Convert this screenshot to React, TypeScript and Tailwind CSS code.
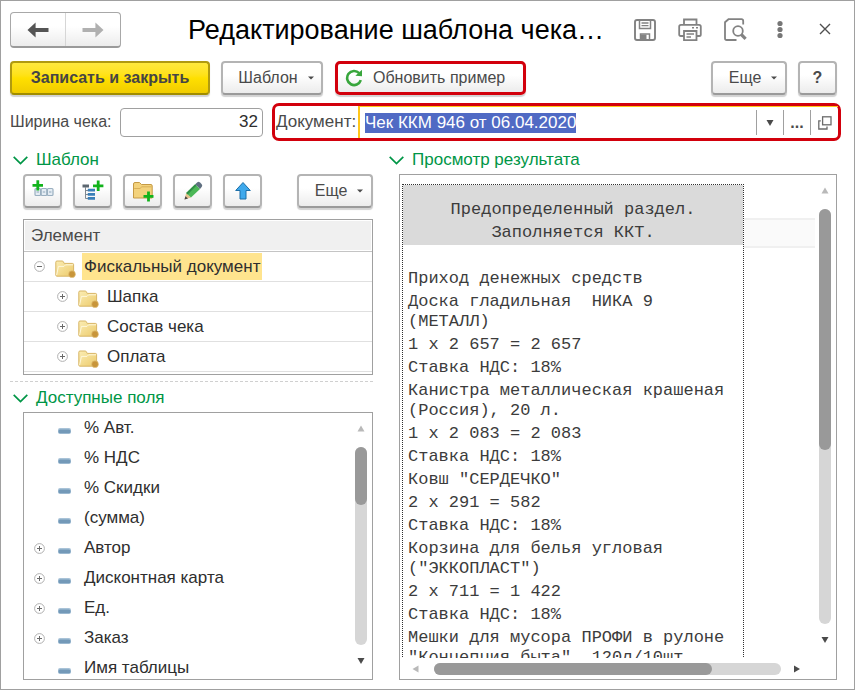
import { useEffect, useRef, type ReactNode } from 'react';

const SANS = "font-['Liberation_Sans',Arial,sans-serif]";
const MONO = "font-['Liberation_Mono','Courier_New',monospace]";

const BUTTON =
  'flex h-[34px] items-center justify-center rounded-[4px] border-2 border-[#b4b4b4] border-b-[#9a9a9a] bg-linear-to-b from-white from-40% to-[#ececec] text-[16px] text-[#4a4a4a] shadow-[0_2px_1px_#d2d2d2]';

function Caret() {
  return (
    <svg width="6" height="4" viewBox="0 0 6 4" aria-hidden="true">
      <path d="M0 0.5h6L3 3.5z" fill="#4a4a4a" />
    </svg>
  );
}

function Chevron() {
  return (
    <svg width="15" height="9" viewBox="0 0 15 9" fill="none" stroke="#009646" strokeWidth="1.7" aria-hidden="true">
      <path d="M0.7 0.8L7.5 7.6L14.3 0.8" />
    </svg>
  );
}

function SectionTitle({ children }: { children: ReactNode }) {
  return (
    <h2 className="flex h-5 items-center gap-2 text-[#009646]">
      <Chevron />
      {children}
    </h2>
  );
}

function MoreButton() {
  return (
    <button type="button" className={`${BUTTON} w-[76px] gap-2.5 pl-2`}>
      Еще
      <Caret />
    </button>
  );
}

function Expander({ open = false }: { open?: boolean }) {
  return (
    <svg width="11" height="11" viewBox="0 0 11 11" fill="none" className="shrink-0" aria-hidden="true">
      <circle cx="5.5" cy="5.5" r="4.9" stroke="#b0b0b0" />
      <path d={open ? 'M3 5.5h5' : 'M3 5.5h5M5.5 3v5'} stroke="#6a6a6a" />
    </svg>
  );
}

function Folder() {
  return (
    <svg width="21" height="18" viewBox="0 0 21 18" className="shrink-0" aria-hidden="true">
      <defs>
        <linearGradient id="folderFill" x1="0" y1="0" x2="1" y2="1">
          <stop offset="0" stopColor="#fbedb4" />
          <stop offset="1" stopColor="#ecca6a" />
        </linearGradient>
      </defs>
      <path
        d="M0.8 15V2.2Q0.8 1 2 1H7.2Q8 1 8.4 1.8L9.2 3.4H17.4Q18.6 3.4 18.6 4.6V15Q18.6 16.2 17.4 16.2H2Q0.8 16.2 0.8 15Z"
        fill="url(#folderFill)"
        stroke="#d8b666"
      />
      <path d="M1.6 15.2L3.4 6.4H9L10.6 4.8H18" fill="none" stroke="#fff8dc" />
      <circle cx="17" cy="14.2" r="3.4" fill="#c8953a" stroke="#e3c27c" strokeWidth="0.6" />
    </svg>
  );
}

function FieldMark() {
  return (
    <svg width="13" height="6" viewBox="0 0 13 6" className="mt-[5px] shrink-0" aria-hidden="true">
      <rect width="13" height="6" rx="2" fill="#a9c3d8" />
      <rect x="0.5" y="1.4" width="12" height="3.8" rx="1.5" fill="#7399b8" />
    </svg>
  );
}

function Arrow({ dir, dim = false }: { dir: 'up' | 'down' | 'left' | 'right'; dim?: boolean }) {
  const paths = {
    up: 'M0.5 6.5h7L4 0.5z',
    down: 'M0.5 1h7L4 7z',
    left: 'M6.5 0.5v7L0.5 4z',
    right: 'M1 0.5v7L7 4z',
  };
  return (
    <svg width="8" height="8" viewBox="0 0 8 8" className="shrink-0" aria-hidden="true">
      <path d={paths[dir]} fill={dim ? '#b9b9b9' : '#4a4a4a'} />
    </svg>
  );
}

function VerticalBar({ thumb }: { thumb: string }) {
  return (
    <div className="flex w-3 shrink-0 flex-col items-center">
      <Arrow dir="up" dim />
      <div className="mt-[14px] mb-3 w-3 flex-1 rounded-full bg-[#d6d6d6]">
        <div className={`w-3 rounded-full bg-[#999999] ${thumb}`} />
      </div>
      <Arrow dir="down" />
    </div>
  );
}

function NavArrow({ back = false }: { back?: boolean }) {
  return (
    <svg width="22" height="16" viewBox="0 0 22 16" aria-hidden="true">
      {back ? (
        <path d="M0.5 8L8.6 0.4V6H21.5V10H8.6V15.6Z" fill="#545454" />
      ) : (
        <path d="M21.5 8L13.4 0.4V6H0.5V10H13.4V15.6Z" fill="#b0b0b0" />
      )}
    </svg>
  );
}

function SaveIcon() {
  return (
    <svg width="24" height="24" viewBox="0 0 24 24" fill="none" stroke="#828282" strokeWidth="1.9" aria-hidden="true">
      <path d="M2 4Q2 2 4 2H20Q22 2 22 4V20Q22 22 20 22H4Q2 22 2 20Z" />
      <path d="M6.5 2V10.5H17.5V2" strokeWidth="1.5" />
      <path d="M8.5 5H15.5M8.5 7.6H15.5" strokeWidth="1.3" />
      <path d="M7.5 22V16H16.5V22" strokeWidth="1.5" />
      <path d="M8 16.5H13.5V22H8z" fill="#828282" stroke="none" />
    </svg>
  );
}

function PrintIcon() {
  return (
    <svg width="24" height="24" viewBox="0 0 24 24" fill="none" stroke="#828282" strokeWidth="1.8" aria-hidden="true">
      <path d="M6 6.5V1.5H18.5V6.5" />
      <path d="M6 18H2.8Q1.2 18 1.2 16.4V8.6Q1.2 6.8 3 6.8H21Q22.8 6.8 22.8 8.6V16.4Q22.8 18 21.2 18H18.5" />
      <path d="M6 13V22.2H18.5V13Z" />
      <path d="M8.5 16H16M8.5 19H13" strokeWidth="1.4" />
      <path d="M14 9.7H16M18 9.7H20" strokeWidth="1.5" />
    </svg>
  );
}

function PreviewIcon() {
  return (
    <svg width="24" height="24" viewBox="0 0 24 24" fill="none" stroke="#828282" aria-hidden="true">
      <path d="M20.2 6.5V3Q20.2 1.2 18.4 1.2H5.5L2 4.2V20.2Q2 22 3.8 22H13.5" strokeWidth="1.8" />
      <circle cx="15" cy="13" r="4.8" strokeWidth="1.8" />
      <path d="M18.2 16.4L22.6 20.8" strokeWidth="3.2" />
    </svg>
  );
}

function DotsIcon() {
  return (
    <svg width="24" height="24" viewBox="0 0 24 24" fill="#767676" aria-hidden="true">
      <circle cx="12" cy="5.5" r="2.6" />
      <circle cx="12" cy="11.5" r="2.6" />
      <circle cx="12" cy="17.5" r="2.6" />
    </svg>
  );
}

function CloseIcon() {
  return (
    <svg width="24" height="24" viewBox="0 0 24 24" fill="none" stroke="#4f4f4f" strokeWidth="1.4" aria-hidden="true">
      <path d="M7 6L17 16M17 6L7 16" />
    </svg>
  );
}

function RefreshIcon() {
  return (
    <svg width="18" height="18" viewBox="0 0 18 18" fill="none" aria-hidden="true">
      <path d="M14.2 4.2A7 7 0 1 0 15.8 11.2" stroke="#38a63c" strokeWidth="2.6" />
      <path d="M10.4 6.8L17 7.2V0.8Z" fill="#38a63c" />
    </svg>
  );
}

function OpenIcon() {
  return (
    <svg width="14" height="14" viewBox="0 0 14 14" fill="none" stroke="#6b6b6b" strokeWidth="1.3" aria-hidden="true">
      <rect x="4.6" y="0.8" width="8.4" height="8" />
      <path d="M2.8 4.8H0.8V13H9V10.6" />
    </svg>
  );
}

function AddFieldIcon() {
  return (
    <svg width="24" height="24" viewBox="0 0 24 24" fill="none" aria-hidden="true">
      <g fill="#e4ecf3" stroke="#9aafc0" strokeWidth="1.2">
        <rect x="4" y="9.5" width="5.6" height="7" rx="1" />
        <rect x="10.2" y="9.5" width="5.6" height="7" rx="1" />
        <rect x="16.4" y="9.5" width="5.6" height="7" rx="1" />
      </g>
      <path d="M5.6 13H8M11.8 13H14.2M18 13H20.4" stroke="#8ea6ba" />
      <path d="M1.5 6.4H12M6.8 1.2V11.6" stroke="#12b31c" strokeWidth="2.8" />
    </svg>
  );
}

function AddTreeIcon() {
  return (
    <svg width="24" height="24" viewBox="0 0 24 24" fill="none" aria-hidden="true">
      <path d="M1.5 7H8" stroke="#5c6770" strokeWidth="3" />
      <path d="M4.5 8V19.5H8M4.5 11.5H8M4.5 15.5H8" stroke="#7f8991" />
      <path d="M6.8 11.2H14M6.8 15.3H14M6.8 19.4H14" stroke="#3a7fb8" strokeWidth="2.8" />
      <path d="M12 6.8H22.4M17.2 1.6V12" stroke="#12b31c" strokeWidth="2.8" />
    </svg>
  );
}

function AddFolderIcon() {
  return (
    <svg width="24" height="24" viewBox="0 0 24 24" fill="none" aria-hidden="true">
      <path d="M2.5 19V5Q2.5 3.5 4 3.5H8.5L10.5 5.5H20Q21.2 5.5 21.2 7V19Z" fill="#f3d27c" stroke="#c59a45" />
      <path d="M3.2 9.5H9L10.8 7.8H20.6" stroke="#d8af58" />
      <path d="M12.5 17.4H22.5M17.5 12.4V22.4" stroke="#12b31c" strokeWidth="2.8" />
    </svg>
  );
}

function PencilIcon() {
  return (
    <svg width="24" height="24" viewBox="0 0 24 24" aria-hidden="true">
      <path d="M3.5 20.5L5.2 14L10 18.6Z" fill="#e6c08a" />
      <path d="M3.5 20.5L4.4 17.2L7 19.6Z" fill="#444" />
      <path d="M5.2 14L14.2 5.2L19 10L10 18.6Z" fill="#4cb857" />
      <path d="M5.2 14L14.2 5.2L15.6 6.6L6.7 15.4Z" fill="#2f8f45" />
      <path d="M14.2 5.2L16.4 3.2Q17.6 2.2 19 3.4L20.6 5Q21.8 6.4 20.8 7.8L19 10Z" fill="#5f6f80" />
    </svg>
  );
}

function UpIcon() {
  return (
    <svg width="24" height="24" viewBox="0 0 24 24" aria-hidden="true">
      <path d="M12 3.5L19.3 11.5H15V20H9V11.5H4.7Z" fill="#3fa9ec" stroke="#1d6fa8" strokeLinejoin="round" />
    </svg>
  );
}

const windowActions = [
  { label: 'Сохранить', icon: <SaveIcon /> },
  { label: 'Печать', icon: <PrintIcon /> },
  { label: 'Просмотр', icon: <PreviewIcon /> },
  { label: 'Дополнительно', icon: <DotsIcon /> },
  { label: 'Закрыть', icon: <CloseIcon /> },
];

const templateActions = [
  { label: 'Добавить поле', icon: <AddFieldIcon /> },
  { label: 'Добавить раздел', icon: <AddTreeIcon /> },
  { label: 'Добавить группу', icon: <AddFolderIcon /> },
  { label: 'Изменить', icon: <PencilIcon /> },
  { label: 'Переместить вверх', icon: <UpIcon /> },
];

const sections = ['Шапка', 'Состав чека', 'Оплата'];

const fields = [
  { name: '% Авт.', group: false },
  { name: '% НДС', group: false },
  { name: '% Скидки', group: false },
  { name: '(сумма)', group: false },
  { name: 'Автор', group: true },
  { name: 'Дисконтная карта', group: true },
  { name: 'Ед.', group: true },
  { name: 'Заказ', group: true },
  { name: 'Имя таблицы', group: false },
];

const receipt = [
  'Приход денежных средств',
  'Доска гладильная  НИКА 9\n(МЕТАЛЛ)',
  '1 x 2 657 = 2 657',
  'Ставка НДС: 18%',
  'Канистра металлическая крашеная\n(Россия), 20 л.',
  '1 x 2 083 = 2 083',
  'Ставка НДС: 18%',
  'Ковш "СЕРДЕЧКО"',
  '2 x 291 = 582',
  'Ставка НДС: 18%',
  'Корзина для белья угловая\n("ЭККОПЛАСТ")',
  '2 x 711 = 1 422',
  'Ставка НДС: 18%',
  'Мешки для мусора ПРОФИ в рулоне\n"Концепция быта", 120л/10шт',
];

function Header() {
  return (
    <header className="flex h-9 items-center">
      <div className="flex h-9 w-[111px] shrink-0 rounded-[4px] border border-[#a8a8a8] border-b-2 border-b-[#9a9a9a] bg-linear-to-b from-white from-40% to-[#ececec]">
        <button type="button" aria-label="Назад" className="flex flex-1 items-center justify-center border-r border-[#d6d6d6]">
          <NavArrow back />
        </button>
        <button type="button" aria-label="Вперед" className="flex flex-1 items-center justify-center">
          <NavArrow />
        </button>
      </div>
      <h1 className="min-w-0 flex-1 truncate pl-[67px] text-[27px] leading-9 text-black">Редактирование шаблона чека…</h1>
      <div className="flex shrink-0 gap-[21px]">
        {windowActions.map((action) => (
          <button key={action.label} type="button" aria-label={action.label}>
            {action.icon}
          </button>
        ))}
      </div>
    </header>
  );
}

function CommandBar() {
  return (
    <div className="mt-[13px] flex items-center">
      <button
        type="button"
        className="h-[34px] w-[200px] rounded-[4px] border-2 border-[#b09a10] border-b-[#a08c00] bg-linear-to-b from-[#ffe93c] via-[#ffe000] to-[#f0cc00] text-[16px] font-bold text-[#454545] shadow-[0_2px_1px_#d2d2d2]"
      >
        Записать и закрыть
      </button>
      <button type="button" className={`${BUTTON} ml-[11px] w-[102px] gap-2.5 pl-2`}>
        Шаблон
        <Caret />
      </button>
      <button
        type="button"
        className="ml-3 flex h-[34px] w-[191px] items-center gap-2.5 rounded-[5px] border-3 border-[#d2000c] bg-linear-to-b from-white from-40% to-[#ececec] pl-[7px] text-[16px] text-[#4a4a4a] shadow-[0_2px_1px_#d2d2d2]"
      >
        <RefreshIcon />
        Обновить пример
      </button>
      <div className="ml-auto flex gap-[11px]">
        <MoreButton />
        <button type="button" className={`${BUTTON} w-[39px] font-bold`}>
          ?
        </button>
      </div>
    </div>
  );
}

function Parameters() {
  const documentInput = useRef<HTMLInputElement>(null);

  useEffect(() => {
    documentInput.current?.focus();
    documentInput.current?.select();
  }, []);

  return (
    <div className="mt-2 -mr-1 flex h-[38px] items-center">
      <label htmlFor="width" className="w-[110px] shrink-0 text-[16px] whitespace-nowrap text-[#4a4a4a]">
        Ширина чека:
      </label>
      <input
        id="width"
        defaultValue="32"
        className="h-[29px] w-[143px] rounded-[4px] border border-[#a0a0a0] bg-white px-1 text-right text-[#2e2e2e]"
      />
      <div className="ml-[9px] flex h-[38px] flex-1 items-stretch rounded-[7px] border-3 border-[#d2000c]">
        <label htmlFor="document" className="flex w-[83px] shrink-0 items-center pl-px text-[#4a4a4a]">
          Документ:
        </label>
        <div className="flex min-w-0 flex-1 items-stretch border-t border-l-2 border-[#ffc61a]">
          <input
            id="document"
            ref={documentInput}
            defaultValue="Чек ККМ 946 от 06.04.2020"
            className="min-w-0 flex-1 pl-[5px] text-[#2e2e2e] outline-none selection:bg-[#506ac4] selection:text-white"
          />
          <div className="my-[3px] flex">
            <button type="button" aria-label="Выбрать из списка" className="flex w-[27px] items-center justify-center border-l border-[#a0a0a0]">
              <Arrow dir="down" />
            </button>
            <button type="button" aria-label="Выбрать" className="flex w-[27px] items-center justify-center border-l border-[#a0a0a0] text-[16px] font-bold text-[#4a4a4a]">
              ...
            </button>
            <button type="button" aria-label="Открыть" className="flex w-7 items-center justify-center border-l border-[#a0a0a0]">
              <OpenIcon />
            </button>
          </div>
        </div>
      </div>
    </div>
  );
}

function TemplatePanel() {
  return (
    <section>
      <div className="pl-[3px]">
        <SectionTitle>Шаблон</SectionTitle>
      </div>
      <div className="mt-1 flex gap-[11px] pl-[13px]">
        {templateActions.map((action) => (
          <button key={action.label} type="button" aria-label={action.label} className={`${BUTTON} w-[39px]`}>
            {action.icon}
          </button>
        ))}
        <div className="ml-auto">
          <MoreButton />
        </div>
      </div>
      <div className="mt-[11px] ml-[13px] h-[156px] overflow-hidden border border-[#a0a0a0]">
        <table className="w-full border-separate border-spacing-0 text-[#2e2e2e]">
          <thead>
            <tr>
              <th className="h-8 border-b border-[#c4c4c4] p-px text-left font-normal text-[#4a4a4a]">
                <div className="flex h-[29px] items-center bg-[#f0f0f0] pl-1.5">Элемент</div>
              </th>
            </tr>
          </thead>
          <tbody>
            <tr>
              <td className="h-[30px] border-b border-[#e0e0e0] p-0">
                <div className="flex h-[29px] items-center pl-2.5">
                  <Expander open />
                  <span className="ml-2.5 flex pt-1">
                    <Folder />
                  </span>
                  <span className="ml-1.5 flex h-[27px] items-center bg-[#ffe48e] px-0.5">Фискальный документ</span>
                </div>
              </td>
            </tr>
            {sections.map((name) => (
              <tr key={name}>
                <td className="h-[30px] border-b border-[#e0e0e0] p-0">
                  <div className="flex h-[29px] items-center pl-[33px]">
                    <Expander />
                    <span className="ml-2.5 flex pt-1">
                      <Folder />
                    </span>
                    <span className="ml-2">{name}</span>
                  </div>
                </td>
              </tr>
            ))}
          </tbody>
        </table>
      </div>
    </section>
  );
}

function FieldsPanel() {
  return (
    <section className="flex min-h-0 flex-1 flex-col">
      <div className="pl-[3px]">
        <SectionTitle>Доступные поля</SectionTitle>
      </div>
      <div className="mt-1 ml-[13px] flex min-h-0 flex-1 overflow-hidden border border-[#a0a0a0] pr-[5px]">
        <ul className="flex-1 text-[#2e2e2e]">
          {fields.map((field) => (
            <li key={field.name} className="flex h-[30px] items-center pl-2.5">
              <span className="w-6">{field.group && <Expander />}</span>
              <FieldMark />
              <span className="ml-[13px]">{field.name}</span>
            </li>
          ))}
        </ul>
        <div className="flex pt-3 pb-3.5">
          <VerticalBar thumb="h-[58px]" />
        </div>
      </div>
    </section>
  );
}

function ResultPanel() {
  return (
    <section className="flex min-h-0 min-w-0 flex-1 flex-col">
      <SectionTitle>Просмотр результата</SectionTitle>
      <div className="mt-1 ml-[10px] flex min-h-0 flex-1 border border-[#a0a0a0] pr-[5px]">
        <div className="flex min-w-0 flex-1 flex-col">
          <div className="flex min-h-0 flex-1 overflow-hidden pt-[9px]">
            <div
              className={`ml-0.5 w-[342px] shrink-0 self-start border border-dotted border-[#303030] text-[17px] leading-5 text-[#3c3c3c] ${MONO}`}
            >
              <div className="bg-[#dadada] pt-[14px] text-center">
                <p className="h-[23px] pt-px">Предопределенный раздел.</p>
                <p className="h-[23px] pt-px">Заполняется ККТ.</p>
              </div>
              <div className="pt-[23px] pl-[5px]">
                {receipt.map((line, index) => (
                  <p key={index} className="pt-px pb-0.5 whitespace-pre">
                    {line}
                  </p>
                ))}
              </div>
            </div>
            <div className="mt-[34px] h-[30px] flex-1 border-y-2 border-[#f0f0f0] bg-[#fafafa]" />
          </div>
          <div className="flex h-[21px] items-center pr-3.5 pl-3">
            <Arrow dir="left" dim />
            <div className="mr-3 ml-[14px] h-3 flex-1 rounded-full bg-[#d6d6d6]">
              <div className="h-3 w-4/5 rounded-full bg-[#999999]" />
            </div>
            <Arrow dir="right" />
          </div>
        </div>
        <div className="flex pt-3 pb-[35px] pl-1">
          <VerticalBar thumb="h-[58%]" />
        </div>
      </div>
    </section>
  );
}

export default function App() {
  return (
    <main className={`flex h-screen flex-col border border-[#a0a0a0] bg-white pt-[11px] pr-[17px] pb-[9px] pl-[9px] text-[17px] leading-5 ${SANS}`}>
      <Header />
      <CommandBar />
      <Parameters />
      <div className="mt-[9px] flex min-h-0 flex-1 gap-4">
        <div className="flex w-[363px] shrink-0 flex-col">
          <TemplatePanel />
          <div className="my-1.5 border-t border-dashed border-[#d0d0d0]" />
          <FieldsPanel />
        </div>
        <ResultPanel />
      </div>
    </main>
  );
}
